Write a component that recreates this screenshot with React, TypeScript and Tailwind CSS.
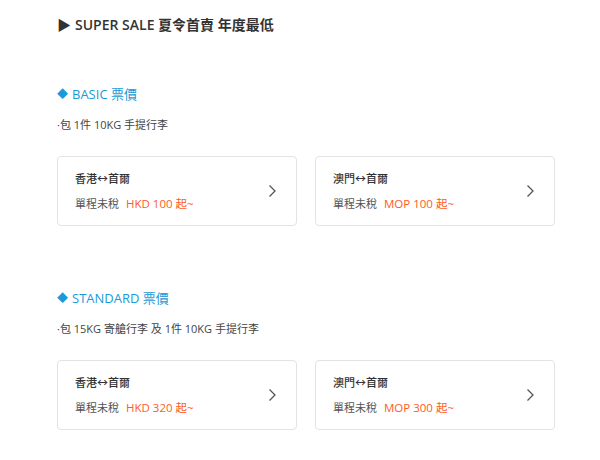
import React from "react"

interface Fare {
  route: string
  price: string
}

interface Section {
  name: string
  note: string
  fares: Fare[]
}

const sections: Section[] = [
  {
    name: "BASIC 票價",
    note: "·包 1件 10KG 手提行李",
    fares: [
      { route: "香港↔首爾", price: "HKD 100 起~" },
      { route: "澳門↔首爾", price: "MOP 100 起~" },
    ],
  },
  {
    name: "STANDARD 票價",
    note: "·包 15KG 寄艙行李 及 1件 10KG 手提行李",
    fares: [
      { route: "香港↔首爾", price: "HKD 320 起~" },
      { route: "澳門↔首爾", price: "MOP 300 起~" },
    ],
  },
]

const Chevron = () => (
  <svg width="10" height="14" viewBox="0 0 10 14" fill="none" className="shrink-0">
    <path d="M2.5 1.5 L8 7 L2.5 12.5" stroke="#555" strokeWidth="1.3" />
  </svg>
)

const FareCard = ({ fare }: { fare: Fare }) => (
  <div className="flex h-[70px] items-center justify-between rounded-[4px] border border-[#e3e3e3] bg-white pl-[17px] pr-[19px]">
    <div className="flex flex-col pt-[1px]">
      <div className="text-[11px] leading-[16px] font-medium text-[#333]">{fare.route}</div>
      <div className="mt-[9px] flex items-center text-[11px] leading-[16px] text-[#555]">
        <span>單程未稅</span>
        <span className="ml-[7px] text-[11.5px] text-[#ff5a1e]">{fare.price}</span>
      </div>
    </div>
    <Chevron />
  </div>
)

export default function App() {
  return (
    <div
      className="min-h-[460px] w-[600px] bg-white"
      style={{ fontFamily: '"Open Sans", "Noto Sans CJK TC", sans-serif' }}
    >
      <div className="ml-[57px] w-[498px] pt-[15px]">
        <h2 className="flex items-center text-[14px] leading-[20px] font-semibold text-[#333]">
          <span className="mr-[4px] text-[14px]">▶</span>
          SUPER SALE 夏令首賣 年度最低
        </h2>

        {sections.map((s, i) => (
          <div key={s.name} className={i === 0 ? "mt-[49px]" : "mt-[62px]"}>
            <h3 className="flex items-center text-[13px] leading-[20px] text-[#1a9ad6]">
              <span className="mr-[4px] text-[11px]">◆</span>
              {s.name}
            </h3>
            <p className="mt-[13px] text-[11px] leading-[16px] text-[#444]">{s.note}</p>
            <div className="mt-[23px] grid grid-cols-2 gap-[18px]">
              {s.fares.map((f) => (
                <FareCard key={f.route} fare={f} />
              ))}
            </div>
          </div>
        ))}
      </div>
    </div>
  )
}
